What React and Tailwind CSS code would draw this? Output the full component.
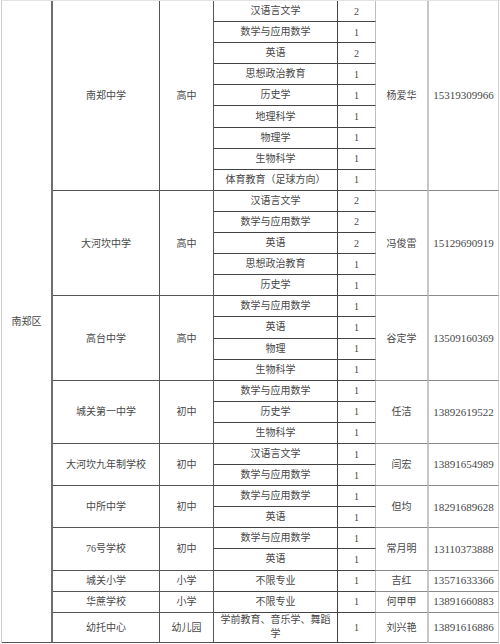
import React from 'react';

const schools = [
    {
        name: '南郑中学', level: '高中', contact: '杨爱华', phone: '15319309966',
        majors: [
            ['汉语言文学', 2], ['数学与应用数学', 1], ['英语', 2], ['思想政治教育', 1], ['历史学', 1],
            ['地理科学', 1], ['物理学', 1], ['生物科学', 1], ['体育教育（足球方向）', 1],
        ],
    },
    {
        name: '大河坎中学', level: '高中', contact: '冯俊雷', phone: '15129690919',
        majors: [['汉语言文学', 2], ['数学与应用数学', 2], ['英语', 2], ['思想政治教育', 1], ['历史学', 1]],
    },
    {
        name: '高台中学', level: '高中', contact: '谷定学', phone: '13509160369',
        majors: [['数学与应用数学', 1], ['英语', 1], ['物理', 1], ['生物科学', 1]],
    },
    {
        name: '城关第一中学', level: '初中', contact: '任洁', phone: '13892619522',
        majors: [['数学与应用数学', 1], ['历史学', 1], ['生物科学', 1]],
    },
    {
        name: '大河坎九年制学校', level: '初中', contact: '闫宏', phone: '13891654989',
        majors: [['汉语言文学', 1], ['数学与应用数学', 1]],
    },
    {
        name: '中所中学', level: '初中', contact: '但均', phone: '18291689628',
        majors: [['数学与应用数学', 1], ['英语', 1]],
    },
    {
        name: '76号学校', level: '初中', contact: '常月明', phone: '13110373888',
        majors: [['数学与应用数学', 1], ['英语', 1]],
    },
    { name: '城关小学', level: '小学', contact: '吉红', phone: '13571633366', majors: [['不限专业', 1]] },
    { name: '华蔗学校', level: '小学', contact: '何甲甲', phone: '13891660883', majors: [['不限专业', 1]] },
    { name: '幼托中心', level: '幼儿园', contact: '刘兴艳', phone: '13891616886', majors: [['学前教育、音乐学、舞蹈学', 1]] },
];

// full class names so tailwind picks them up
const spans = {
    1: 'row-span-1',
    2: 'row-span-2',
    3: 'row-span-3',
    4: 'row-span-4',
    5: 'row-span-5',
    9: 'row-span-9',
};

const cell = 'flex items-center justify-center text-center';
const col2 = `${cell} border-r border-b border-[#555]`;
const col4 = `${cell} border-r border-b border-[#444] px-[6px] leading-[14px]`;
const col5 = `${cell} border-r border-r-[#bdbdbd] border-b border-b-[#444]`;
const col6 = `${cell} border-r-2 border-r-[#c6c6c6] border-b border-b-[#8a8a8a]`;
const col7 = `${cell} border-r border-r-[#cfcfcf] border-b border-b-[#8a8a8a] text-[11px]`;

export default function App() {
    return (
        <div className="w-[500px] h-[644px] bg-white pl-[1px] overflow-hidden">
            <div
                className="grid grid-cols-[51px_107px_54px_124px_38px_53px_70px] grid-rows-[repeat(29,21.1px)_30px] border-l border-t border-l-[#cfcfcf] border-t-[#e2e2e2] text-[10px] text-[#474747]"
                style={{ fontFamily: '"Liberation Serif", "Noto Sans CJK SC", serif' }}
            >
                <div className={`${cell} row-span-30 border-r-2 border-r-[#6e6e6e] border-b border-b-[#555]`}>南郑区</div>
                {schools.map((s) => {
                    const span = spans[s.majors.length];
                    return (
                        <React.Fragment key={s.name}>
                            <div className={`${col2} ${span}`}>{s.name}</div>
                            <div className={`${col2} ${span}`}>{s.level}</div>
                            <div className={col4}>{s.majors[0][0]}</div>
                            <div className={col5}>{s.majors[0][1]}</div>
                            <div className={`${col6} ${span}`}>{s.contact}</div>
                            <div className={`${col7} ${span}`}>{s.phone}</div>
                            {s.majors.slice(1).map(([m, n], i) => (
                                <React.Fragment key={i}>
                                    <div className={col4}>{m}</div>
                                    <div className={col5}>{n}</div>
                                </React.Fragment>
                            ))}
                        </React.Fragment>
                    );
                })}
            </div>
        </div>
    );
}
